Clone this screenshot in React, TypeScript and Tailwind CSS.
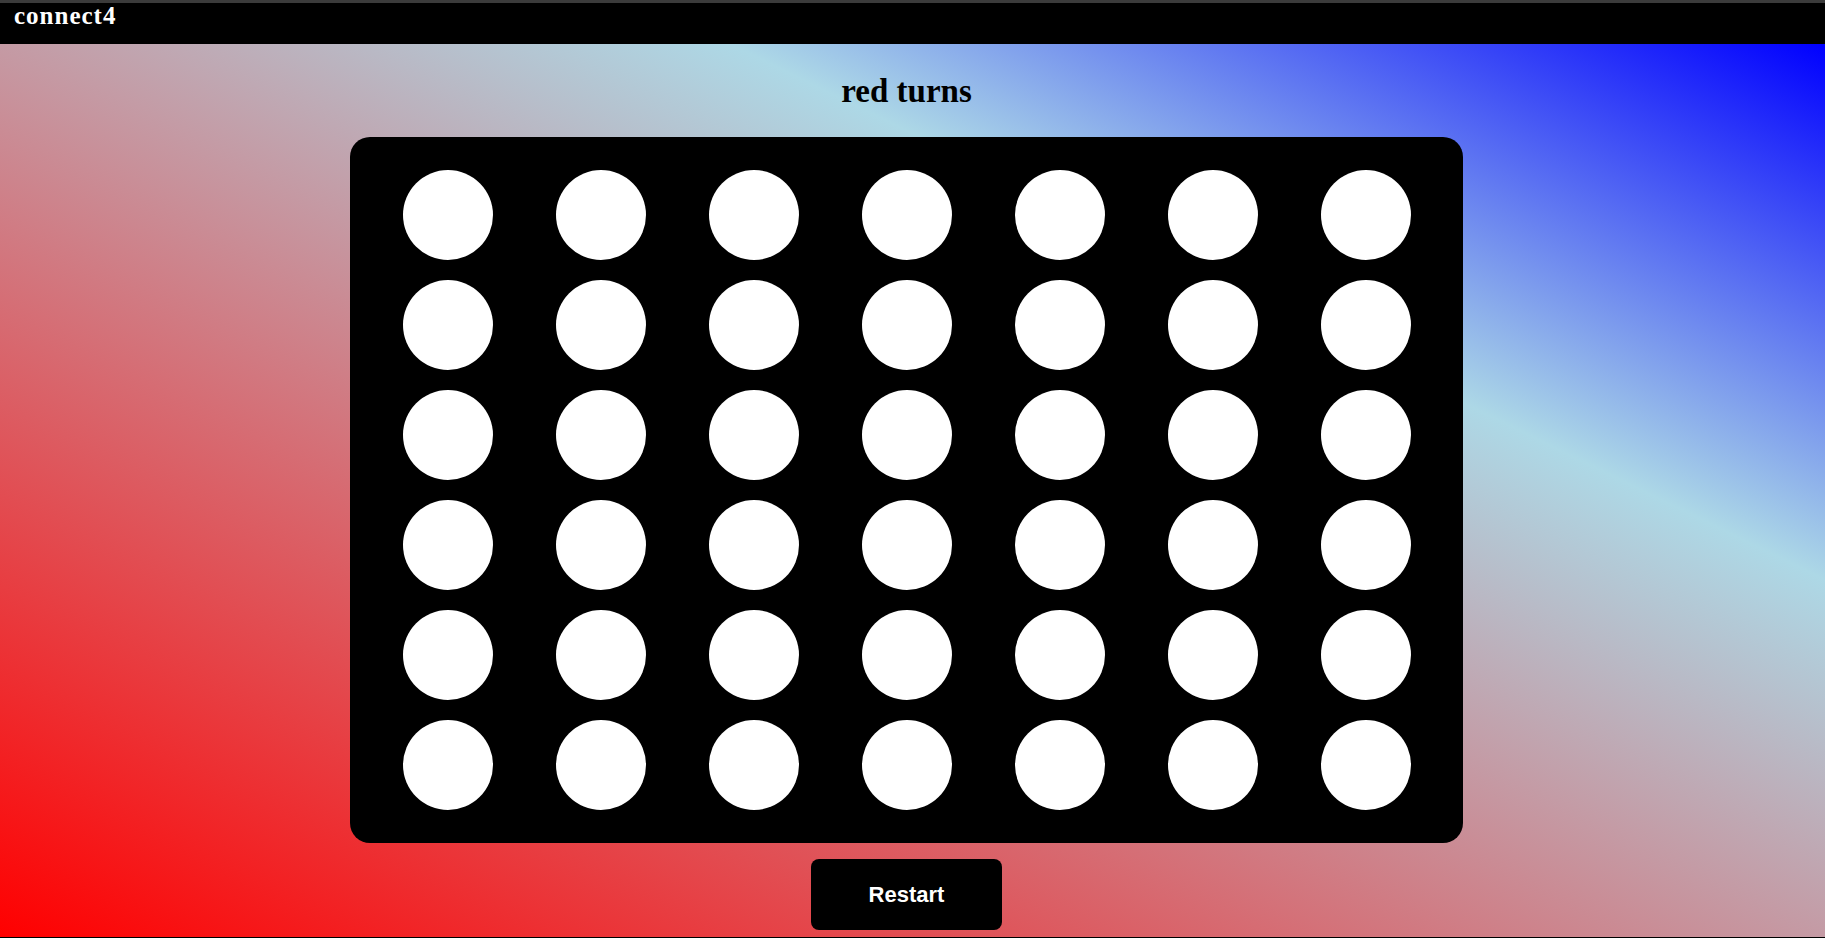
import React, { useState } from "react"

const ROWS = 6
const COLS = 7

const App = () => {
    const [turn, setTurn] = useState<"red" | "yellow">("red")
    const [board, setBoard] = useState<(null | "red" | "yellow")[][]>(
        Array.from({ length: ROWS }, () => Array(COLS).fill(null))
    )

    const drop = (col: number) => {
        const next = board.map(r => [...r])
        for (let r = ROWS - 1; r >= 0; r--) {
            if (!next[r][col]) {
                next[r][col] = turn
                setBoard(next)
                setTurn(turn === "red" ? "yellow" : "red")
                return
            }
        }
    }

    const restart = () => {
        setBoard(Array.from({ length: ROWS }, () => Array(COLS).fill(null)))
        setTurn("red")
    }

    return (
        <div className="h-screen flex flex-col overflow-hidden">
            {/* top bar */}
            <header className="h-[44px] shrink-0 bg-black border-t-[3px] border-[#3b3b3b] pl-[14px]">
                <h1 className="text-[25px] leading-[26px] font-bold tracking-[1px] text-white font-['Liberation_Serif',serif]">
                    connect4
                </h1>
            </header>
            <main className="flex-1 flex flex-col items-center pr-[12px] border-b border-black bg-[linear-gradient(to_top_right,#ff0000,#add8e6_70%,#0000ff)]">
                <h2 className="mt-[23px] mb-[20px] text-[33px] leading-normal font-bold text-black font-['Liberation_Serif',serif]">
                    {turn} turns
                </h2>
                <div className="w-[1113px] h-[706px] bg-black rounded-[20px] px-[21px] py-[23px] grid grid-cols-7">
                    {board.map((row, r) =>
                        row.map((cell, c) => (
                            <div key={`${r}-${c}`} className="h-[110px] flex items-center justify-center" onClick={() => drop(c)}>
                                <div
                                    className={
                                        cell === "red"
                                            ? "w-[90px] h-[90px] rounded-full bg-red-600"
                                            : cell === "yellow"
                                                ? "w-[90px] h-[90px] rounded-full bg-yellow-400"
                                                : "w-[90px] h-[90px] rounded-full bg-white"
                                    }
                                />
                            </div>
                        ))
                    )}
                </div>
                <button
                    onClick={restart}
                    className="mt-[16px] w-[191px] h-[71px] bg-black rounded-[8px] text-white text-[22px] font-bold font-['Liberation_Sans',Arial,sans-serif]"
                >
                    Restart
                </button>
            </main>
        </div>
    )
}

export default App
